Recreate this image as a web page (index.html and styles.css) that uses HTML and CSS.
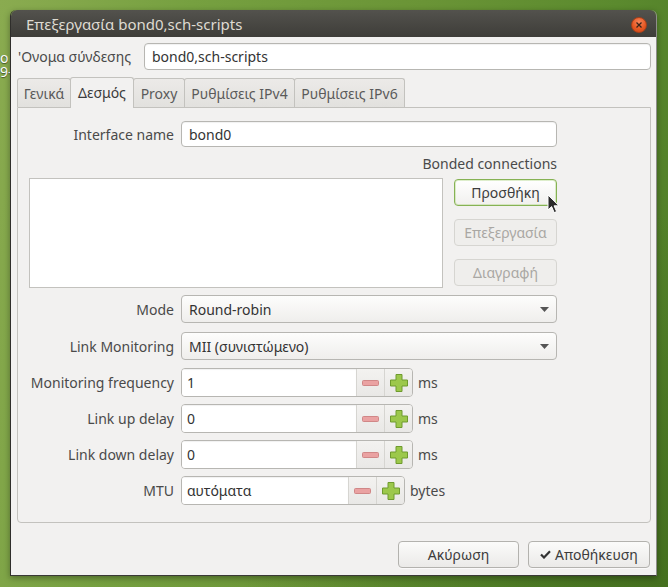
FILE: index.html
```html
<!DOCTYPE html>
<html lang="el">
<head>
<meta charset="utf-8">
<title>Επεξεργασία bond0,sch-scripts</title>
<link rel="stylesheet" href="styles.css">
</head>
<body>
<div class="desk-left"><span class="desk-text">o</span><span class="desk-text">9-</span></div>
<div class="window">
  <div class="titlebar">
    <span class="title">Επεξεργασία bond0,sch-scripts</span>
    <span class="close"><svg width="6" height="6" viewBox="0 0 6 6"><path d="M0.5 0.5L5.5 5.5M5.5 0.5L0.5 5.5" stroke="#3a2418" stroke-width="1.3"/></svg></span>
  </div>
  <div class="content">
    <div class="name-row">
      <span class="name-label">'Ονομα σύνδεσης</span>
      <div class="entry name-entry">bond0,sch-scripts</div>
    </div>
    <div class="tabs">
      <div class="tab t-gen">Γενικά</div>
      <div class="tab active t-bond">Δεσμός</div>
      <div class="tab t-proxy">Proxy</div>
      <div class="tab t-ip">Ρυθμίσεις IPv4</div>
      <div class="tab t-ip">Ρυθμίσεις IPv6</div>
    </div>
    <div class="panel">
      <div class="row row-entry">
        <span class="lbl">Interface name</span>
        <div class="entry field">bond0</div>
      </div>
      <div class="bonded-title">Bonded connections</div>
      <div class="bonded">
        <div class="list"></div>
        <div class="btns">
          <div class="btn hover">Προσθήκη</div>
          <div class="btn disabled">Επεξεργασία</div>
          <div class="btn disabled">Διαγραφή</div>
        </div>
      </div>
      <div class="row row-mode">
        <span class="lbl">Mode</span>
        <div class="combo field"><span>Round-robin</span><svg width="9" height="5" viewBox="0 0 9 5"><path d="M0 0H9L4.5 5Z" fill="#555"/></svg></div>
      </div>
      <div class="row row-lm">
        <span class="lbl">Link Monitoring</span>
        <div class="combo field"><span>MII (συνιστώμενο)</span><svg width="9" height="5" viewBox="0 0 9 5"><path d="M0 0H9L4.5 5Z" fill="#555"/></svg></div>
      </div>
      <div class="row row-spin first">
        <span class="lbl">Monitoring frequency</span>
        <div class="spin">
          <div class="spin-entry">1</div>
          <div class="spin-btn"><svg width="17" height="6" viewBox="0 0 17 6"><rect x="0.5" y="0.5" width="16" height="5" rx="1" fill="#eaa2a2" stroke="#d08787"/></svg></div>
          <div class="spin-btn"><svg width="18" height="18" viewBox="0 0 18 18"><path d="M6 0.5H12V6H17.5V12H12V17.5H6V12H0.5V6H6Z" fill="#9cc84b" stroke="#6f9b2e"/></svg></div>
        </div>
        <span class="unit">ms</span>
      </div>
      <div class="row row-spin">
        <span class="lbl">Link up delay</span>
        <div class="spin">
          <div class="spin-entry">0</div>
          <div class="spin-btn"><svg width="17" height="6" viewBox="0 0 17 6"><rect x="0.5" y="0.5" width="16" height="5" rx="1" fill="#eaa2a2" stroke="#d08787"/></svg></div>
          <div class="spin-btn"><svg width="18" height="18" viewBox="0 0 18 18"><path d="M6 0.5H12V6H17.5V12H12V17.5H6V12H0.5V6H6Z" fill="#9cc84b" stroke="#6f9b2e"/></svg></div>
        </div>
        <span class="unit">ms</span>
      </div>
      <div class="row row-spin">
        <span class="lbl">Link down delay</span>
        <div class="spin">
          <div class="spin-entry">0</div>
          <div class="spin-btn"><svg width="17" height="6" viewBox="0 0 17 6"><rect x="0.5" y="0.5" width="16" height="5" rx="1" fill="#eaa2a2" stroke="#d08787"/></svg></div>
          <div class="spin-btn"><svg width="18" height="18" viewBox="0 0 18 18"><path d="M6 0.5H12V6H17.5V12H12V17.5H6V12H0.5V6H6Z" fill="#9cc84b" stroke="#6f9b2e"/></svg></div>
        </div>
        <span class="unit">ms</span>
      </div>
      <div class="row row-spin">
        <span class="lbl">MTU</span>
        <div class="spin spin-mtu">
          <div class="spin-entry">αυτόματα</div>
          <div class="spin-btn"><svg width="17" height="6" viewBox="0 0 17 6"><rect x="0.5" y="0.5" width="16" height="5" rx="1" fill="#eaa2a2" stroke="#d08787"/></svg></div>
          <div class="spin-btn"><svg width="18" height="18" viewBox="0 0 18 18"><path d="M6 0.5H12V6H17.5V12H12V17.5H6V12H0.5V6H6Z" fill="#9cc84b" stroke="#6f9b2e"/></svg></div>
        </div>
        <span class="unit">bytes</span>
      </div>
    </div>
    <div class="actions">
      <div class="btn cancel">Ακύρωση</div>
      <div class="btn save"><svg width="11" height="9" viewBox="0 0 11 9"><path d="M1 4.5L4 7.5L10 1.2" fill="none" stroke="#333" stroke-width="2.2"/></svg>Αποθήκευση</div>
    </div>
  </div>
  <svg class="cursor" width="13" height="20" viewBox="0 0 13 20"><path d="M1 1V16L4.6 12.6L7.2 18.6L9.6 17.6L7.1 11.8H12Z" fill="#2a2a2a" stroke="#fff" stroke-width="1" stroke-linejoin="round"/></svg>
</div>
</body>
</html>
```
FILE: styles.css
```css
html, body {
  margin: 0;
}
body {
  width: 668px;
  height: 587px;
  box-sizing: border-box;
  padding: 10px 11px 11px 0;
  display: flex;
  overflow: hidden;
  font-family: "Noto Sans", "Open Sans", sans-serif;
  font-size: 14px;
  color: #4a4a4a;
  background:
    radial-gradient(ellipse at 100% 100%, #45701f 0%, rgba(69,112,31,0) 45%),
    linear-gradient(100deg, #8aab50 0%, #76a040 25%, #6a9436 55%, #5b8a2e 80%, #4d7a26 100%);
}
.desk-left {
  width: 10px;
  flex: none;
  overflow: hidden;
  display: flex;
  flex-direction: column;
  padding-top: 41px;
  line-height: 14px;
  font-size: 14px;
  color: #fff;
  white-space: nowrap;
  text-shadow: 0 1px 1px rgba(0,0,0,.5);
}
.desk-text {
  display: block;
  width: 10px;
  height: 14px;
  overflow: hidden;
}
.window {
  position: relative;
  width: 647px;
  box-sizing: border-box;
  display: flex;
  flex-direction: column;
  border-radius: 6px 6px 0 0;
  border-left: 1px solid #2f2e2b;
  border-right: 1px solid #8f8e8a;
  border-bottom: 1px solid #3a3936;
  box-shadow: 0 2px 6px rgba(0,0,0,.35);
  overflow: hidden;
}
.titlebar {
  height: 27px;
  flex: none;
  display: flex;
  align-items: center;
  justify-content: space-between;
  padding: 0 9px 0 15px;
  background: linear-gradient(#53524d, #3e3d39);
  border-radius: 6px 6px 0 0;
}
.title {
  color: #dfdbd2;
  font-size: 15px;
}
.close {
  width: 16px;
  height: 16px;
  margin-top: 2px;
  border-radius: 50%;
  box-sizing: border-box;
  border: 1px solid #a9401a;
  background: radial-gradient(circle at 50% 30%, #f8855a, #e4551f 60%, #c9461a);
  display: flex;
  align-items: center;
  justify-content: center;
}
.content {
  flex: 1;
  background: #f2f1f0;
  padding: 6px 5px 0 6px;
  display: flex;
  flex-direction: column;
}
.name-row {
  display: flex;
  align-items: center;
  height: 27px;
}
.name-label {
  width: 126px;
  padding-left: 1px;
  flex: none;
}
.entry {
  box-sizing: border-box;
  border: 1px solid #b7b6b2;
  border-radius: 4px;
  background: #fff;
  color: #333;
  display: flex;
  align-items: center;
  box-shadow: inset 0 1px 1px rgba(0,0,0,.06);
}
.name-entry {
  flex: 1;
  height: 27px;
  padding-left: 7px;
}
.tabs {
  margin-top: 8px;
  height: 29px;
  display: flex;
  align-items: flex-end;
}
.tab {
  height: 29px;
  box-sizing: border-box;
  margin-right: -1px;
  border: 1px solid #c3c2be;
  border-bottom: none;
  border-radius: 3px 3px 0 0;
  background: linear-gradient(#eceae8, #e2e1de);
  color: #5a5a5a;
  display: flex;
  align-items: center;
  justify-content: center;
}
.t-gen { width: 54px; }
.t-bond { width: 64px; }
.t-proxy { width: 52px; }
.t-ip { width: 111px; }
.tab.active {
  position: relative;
  z-index: 1;
  height: 31px;
  margin-bottom: -1px;
  background: #f2f1f0;
  color: #3c3c3c;
  padding-bottom: 1px;
}
.panel {
  height: 416px;
  box-sizing: border-box;
  border: 1px solid #c3c2be;
  border-radius: 0 0 4px 4px;
  padding: 13px 93px 0 11px;
  display: flex;
  flex-direction: column;
}
.row {
  display: flex;
  align-items: center;
  gap: 7px;
}
.lbl {
  width: 145px;
  flex: none;
  text-align: right;
}
.row-entry {
  height: 26px;
}
.field {
  flex: 1;
  align-self: stretch;
  padding-left: 7px;
}
.bonded-title {
  margin-top: 8px;
  height: 17px;
  line-height: 17px;
  text-align: right;
}
.bonded {
  margin-top: 6px;
  display: flex;
  gap: 11px;
}
.list {
  width: 414px;
  height: 110px;
  box-sizing: border-box;
  border: 1px solid #c3c2be;
  background: #fff;
}
.btns {
  width: 103px;
  margin-top: 1px;
  display: flex;
  flex-direction: column;
  gap: 13px;
}
.btn {
  height: 27px;
  box-sizing: border-box;
  border: 1px solid #b3b2ae;
  border-radius: 4px;
  background: linear-gradient(#fbfbfa, #ebeae8);
  color: #3c3c3c;
  display: flex;
  align-items: center;
  justify-content: center;
  gap: 4px;
  box-shadow: 0 1px 0 rgba(255,255,255,.6);
}
.btn.hover {
  border-color: #86b254;
  background: linear-gradient(#ffffff, #f1f0ee);
  box-shadow: inset 0 0 0 1px rgba(160,205,110,.35);
}
.btn.disabled {
  border-color: #d6d5d1;
  background: #efeeec;
  color: #a9a7a3;
  box-shadow: none;
}
.combo {
  box-sizing: border-box;
  border: 1px solid #b7b6b2;
  border-radius: 4px;
  background: linear-gradient(#fdfdfc, #efeeec);
  color: #333;
  display: flex;
  align-items: center;
  justify-content: space-between;
  padding-right: 7px;
}
.row-mode {
  margin-top: 7px;
  height: 28px;
}
.row-lm {
  margin-top: 9px;
  height: 28px;
}
.row-spin {
  margin-top: 7px;
  height: 29px;
}
.row-spin.first {
  margin-top: 8px;
}
.spin {
  width: 232px;
  height: 29px;
  box-sizing: border-box;
  border: 1px solid #b7b6b2;
  border-radius: 4px;
  display: flex;
  overflow: hidden;
  background: #eeedeb;
}
.spin-mtu {
  width: 224px;
}
.spin-entry {
  flex: 1;
  background: #fff;
  color: #333;
  padding-left: 5px;
  display: flex;
  align-items: center;
  box-shadow: inset 0 1px 1px rgba(0,0,0,.06);
}
.spin-btn {
  width: 27px;
  border-left: 1px solid #d6d5d1;
  display: flex;
  align-items: center;
  justify-content: center;
  background: linear-gradient(#f3f2f0, #e9e8e6);
}
.unit {
  margin-left: -2px;
}
.actions {
  margin-top: 18px;
  display: flex;
  justify-content: flex-end;
  gap: 9px;
  padding-right: 1px;
}
.cancel {
  width: 121px;
}
.save {
  width: 122px;
}
.cursor {
  position: absolute;
  left: 536px;
  top: 184px;
}
```
